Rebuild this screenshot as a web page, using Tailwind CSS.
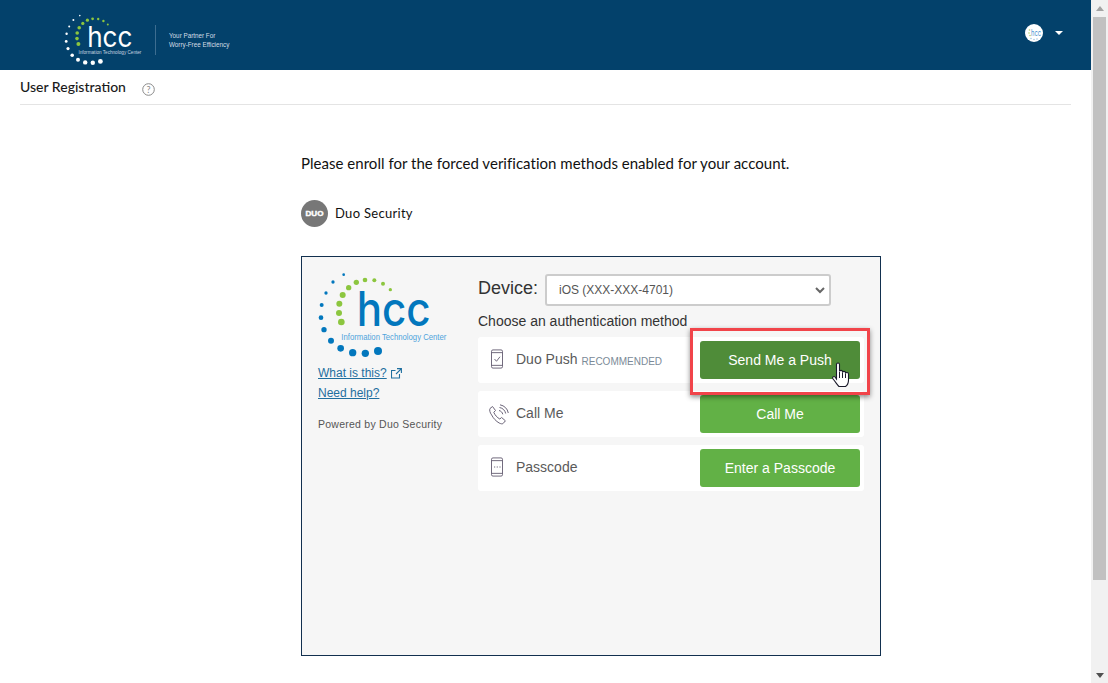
<!DOCTYPE html>
<html lang="en">
<head>
<meta charset="utf-8">
<title>User Registration</title>
<script src="https://cdn.jsdelivr.net/npm/@tailwindcss/browser@4"></script>
</head>
<body class="m-0 bg-white overflow-hidden">
<div class="relative flex w-[1108px] h-[683px] overflow-hidden font-['Lato',sans-serif]">
  <main class="w-[1091px] h-[683px] overflow-hidden">
    <header class="h-[70px] bg-[#03416b] flex items-start justify-between pl-[54px] pr-[28px]">
      <div class="flex items-start pt-[4px]">
        <svg width="108" height="64" viewBox="0 0 540 320">
          <g fill="#ffffff">
            <circle cx="129" cy="58" r="4"/><circle cx="97" cy="80" r="5"/><circle cx="76" cy="113" r="5"/><circle cx="63" cy="149" r="6"/><circle cx="61" cy="187" r="7"/><circle cx="70" cy="223" r="8"/><circle cx="91" cy="256" r="9"/><circle cx="120" cy="279" r="10"/><circle cx="156" cy="292" r="11"/><circle cx="194" cy="294" r="11"/><circle cx="232" cy="287" r="12"/>
          </g>
          <g fill="#8cc63f">
            <circle cx="269" cy="103" r="5"/><circle cx="247" cy="85" r="6"/><circle cx="221" cy="75" r="6"/><circle cx="193" cy="74" r="7"/><circle cx="167" cy="81" r="8"/><circle cx="144" cy="97" r="8"/><circle cx="126" cy="119" r="9"/><circle cx="116" cy="145" r="9"/><circle cx="115" cy="173" r="9"/><circle cx="122" cy="200" r="10"/>
          </g>
          <text x="166" y="213" font-family="Inter" font-weight="400" font-size="143" fill="#ffffff" textLength="226" lengthAdjust="spacingAndGlyphs">hcc</text>
          <text x="122" y="250" font-family="Liberation Sans" font-size="25" fill="#c9d6e0" textLength="315" lengthAdjust="spacingAndGlyphs">Information Technology Center</text>
        </svg>
        <div class="w-px h-[30px] bg-[#3d6d90] mt-[21px] ml-[-7px]"></div>
        <div class="ml-[13px] mt-[28px] text-[6.300px] leading-[8.500px] text-[#d5dee6] font-['Liberation_Sans',sans-serif] whitespace-nowrap">Your Partner For<br>Worry-Free Efficiency</div>
      </div>
      <div class="flex items-center gap-[12px] pt-[24px]">
        <svg class="block" width="18" height="18" viewBox="0 0 18 18">
          <circle cx="9" cy="9" r="9" fill="#ffffff"/>
          <g fill="#b5d56a"><circle cx="4.500" cy="6" r=".8"/><circle cx="4" cy="9" r=".8"/><circle cx="5" cy="11.500" r=".8"/></g>
          <g fill="#8fbde0"><circle cx="6" cy="14.500" r=".7"/><circle cx="9" cy="15.500" r=".7"/><circle cx="12" cy="15" r=".7"/></g>
          <text x="6" y="11.500" font-family="Inter" font-size="9" fill="#3f8fd0" textLength="10" lengthAdjust="spacingAndGlyphs">hcc</text>
        </svg>
        <svg width="8" height="4" viewBox="0 0 8 4"><path d="M0 0h8L4 4z" fill="#ffffff"/></svg>
      </div>
    </header>

    <div class="mx-[20px] w-[1051px] h-[35px] border-b border-[#e4e4e4] flex items-start pt-[8px]">
      <h1 class="text-[14px] leading-[18px] font-medium text-[#1a1a1a]">User Registration</h1>
      <svg class="ml-[16px] mt-[5px]" width="13" height="13" viewBox="0 0 13 13">
        <circle cx="6.500" cy="6.500" r="5.800" fill="none" stroke="#8a8a8a" stroke-width="1"/>
        <text x="6.500" y="9.600" text-anchor="middle" font-family="Lato" font-size="9" fill="#8a8a8a">?</text>
      </svg>
    </div>

    <section class="ml-[301px] w-[580px] pt-[48px]">
      <p class="text-[15px] leading-[20px] tracking-[0.03px] text-[#111111] whitespace-nowrap">Please enroll for the forced verification methods enabled for your account.</p>
      <div class="flex items-center gap-[7px] mt-[27px]">
        <svg class="block" width="27" height="27" viewBox="0 0 27 27">
          <circle cx="13.500" cy="13.500" r="13.500" fill="#777777"/>
          <text x="4.500" y="16" font-family="Liberation Sans" font-weight="700" font-size="7.500" fill="#ffffff" stroke="#ffffff" stroke-width=".4" textLength="18" lengthAdjust="spacingAndGlyphs">DUO</text>
        </svg>
        <span class="text-[13px] leading-[18px] mb-[2px] text-[#111111] tracking-[0.3px]">Duo Security</span>
      </div>

      <div class="mt-[29px] w-[580px] h-[400px] border border-[#12304f] bg-[#f6f6f6] flex font-['Liberation_Sans',sans-serif] pl-[16px] pt-[15px]">
        <div class="w-[160px] shrink-0">
          <svg class="block" width="130" height="88" viewBox="52 50 390 264">
            <g fill="#0277bd">
              <circle cx="129" cy="58" r="4"/><circle cx="97" cy="80" r="5"/><circle cx="76" cy="113" r="5"/><circle cx="63" cy="149" r="6"/><circle cx="61" cy="187" r="7"/><circle cx="70" cy="223" r="8"/><circle cx="91" cy="256" r="9"/><circle cx="120" cy="279" r="10"/><circle cx="156" cy="292" r="11"/><circle cx="194" cy="294" r="11"/><circle cx="232" cy="287" r="12"/>
            </g>
            <g fill="#8cc63f">
              <circle cx="269" cy="103" r="5"/><circle cx="247" cy="85" r="6"/><circle cx="221" cy="75" r="6"/><circle cx="193" cy="74" r="7"/><circle cx="167" cy="81" r="8"/><circle cx="144" cy="97" r="8"/><circle cx="126" cy="119" r="9"/><circle cx="116" cy="145" r="9"/><circle cx="115" cy="173" r="9"/><circle cx="122" cy="200" r="10"/>
            </g>
            <text x="168" y="213" font-family="Inter" font-weight="500" font-size="143" fill="#0277bd" textLength="222" lengthAdjust="spacingAndGlyphs">hcc</text>
            <text x="122" y="254" font-family="Liberation Sans" font-size="27" fill="#4ea4dc" textLength="315" lengthAdjust="spacingAndGlyphs">Information Technology Center</text>
          </svg>
          <div class="mt-[5px] flex items-center gap-[4px] text-[12px] leading-[16px] text-[#1f6f9f]">
            <a class="underline" href="#">What is this?</a>
            <svg width="11" height="11" viewBox="0 0 11 11" fill="none" stroke="#1f6f9f" stroke-width="1.100"><path d="M8.500 6v4h-8V2.500h4M6 .6h4.400V5M10.200.8 5 6"/></svg>
          </div>
          <a class="block mt-[4px] text-[12px] leading-[16px] text-[#1f6f9f] underline" href="#">Need help?</a>
          <p class="mt-[16px] text-[10.500px] leading-[14px] text-[#555555] tracking-[0.25px] whitespace-nowrap">Powered by Duo Security</p>
        </div>

        <div class="w-[386px] shrink-0">
          <div class="flex items-center h-[32px] mt-[2px]">
            <label class="text-[18px] leading-[24px] mb-[4px] text-[#333333] w-[67px]">Device:</label>
            <div class="relative w-[286px] h-[32px]">
              <select class="appearance-none w-full h-full border-2 border-[#cccccc] rounded-[3px] bg-white pl-[12px] text-[12px] text-[#555555]">
                <option>iOS (XXX-XXX-4701)</option>
              </select>
              <svg class="absolute right-[6px] top-[13px]" width="10" height="7" viewBox="0 0 10 7" fill="none" stroke="#666666" stroke-width="2"><path d="M1 1l4 4 4-4"/></svg>
            </div>
          </div>
          <p class="mt-[6px] text-[14px] leading-[18px] text-[#333333] whitespace-nowrap">Choose an authentication method</p>

          <div class="mt-[7px] flex flex-col gap-[8px]">
            <div class="h-[46px] bg-white rounded-[3px] flex items-center justify-between pl-[12px] pr-[4px]">
              <div class="flex items-center">
                <svg class="mr-[12px] mb-[2px]" width="14" height="20" viewBox="0 0 14 22" preserveAspectRatio="none" fill="none" stroke="#6b6478" stroke-width="1"><rect x="1.500" y="1" width="11" height="20" rx="1.500"/><path d="M1.500 4h11M1.500 18h11M4.500 11l2 2.500 3.500-5"/></svg>
                <span class="text-[14px] leading-[18px] mb-[2px] text-[#5a5a5a]">Duo Push</span>
                <span class="ml-[4px] mt-[3px] text-[10px] leading-[14px] text-[#7b8a97]">RECOMMENDED</span>
              </div>
              <button class="w-[160px] h-[38px] rounded-[3px] bg-[#4f8c39] text-white text-[14px]">Send Me a Push</button>
            </div>
            <div class="h-[46px] bg-white rounded-[3px] flex items-center justify-between pl-[10px] pr-[4px]">
              <div class="flex items-center">
                <svg class="mr-[7px]" width="21" height="21" viewBox="0 0 21 21" fill="none" stroke="#6b6478" stroke-width="1"><path d="M2 4.500 4.500 2.500l3 4-1.700 1.800c.9 2.500 3.400 5.400 6 6.700l1.800-1.500 3.800 3.300-2.200 2.600c-1 .8-2.500.4-4-.4-3-1.600-6-4.800-7.600-8.100C1.800 8.700 1.300 5.800 2 4.500z"/><path d="M11 6.500c2 .5 3.300 1.800 3.800 3.800M11.500 3.500c3.300.6 5.500 2.800 6.200 6M12 .8c4.300.8 7.500 3.800 8.300 8.200"/></svg>
                <span class="text-[14px] leading-[18px] mb-[2px] text-[#5a5a5a]">Call Me</span>
              </div>
              <button class="w-[160px] h-[38px] rounded-[3px] bg-[#62b146] text-white text-[14px]">Call Me</button>
            </div>
            <div class="h-[46px] bg-white rounded-[3px] flex items-center justify-between pl-[12px] pr-[4px]">
              <div class="flex items-center">
                <svg class="mr-[12px] mb-[2px]" width="14" height="20" viewBox="0 0 14 22" preserveAspectRatio="none" fill="none" stroke="#6b6478" stroke-width="1"><rect x="1.500" y="1" width="11" height="20" rx="1.500"/><path d="M1.500 4h11M1.500 18h11M4 11h1.200M6.700 11h1.200M9.400 11h1.200"/></svg>
                <span class="text-[14px] leading-[18px] mb-[2px] text-[#5a5a5a]">Passcode</span>
              </div>
              <button class="w-[160px] h-[38px] rounded-[3px] bg-[#62b146] text-white text-[14px]">Enter a Passcode</button>
            </div>
          </div>
        </div>
      </div>
    </section>
  </main>

  <aside class="w-[17px] h-[683px] bg-[#f1f1f1] flex flex-col items-center justify-between">
    <svg class="mt-[6px]" width="8" height="5" viewBox="0 0 8 5"><path d="M4 0l4 5H0z" fill="#a3a3a3"/></svg>
    <div class="absolute top-[17px] right-[2px] w-[13px] h-[563px] bg-[#c1c1c1]"></div>
    <svg class="mb-[5px]" width="8" height="5" viewBox="0 0 8 5"><path d="M0 0h8L4 5z" fill="#505050"/></svg>
  </aside>

  <div class="absolute left-[690px] top-[328px] w-[180px] h-[67px] border-[3px] border-[#f1444a] shadow-[0_2px_5px_rgba(0,0,0,0.45)]"></div>
  <svg class="absolute left-[831px] top-[362px]" width="20" height="26" viewBox="0 0 20 26">
    <path d="M5.500 2.500c0-2 3-2 3 0v7c0-1.500 3-1.500 3 0v1c0-1.500 3-1.500 3 0v1c0-1.500 3-1.300 3 .5v6c0 3-1.500 5.500-3 6.500H8c-1.500-1.500-3.500-4.500-6-7.500-1.300-1.600.8-3.300 2-2l1.500 2z" fill="#ffffff" stroke="#1a1a2a" stroke-width="1.100"/>
    <path d="M8.500 10v6M11.500 10.500V16M14.500 11.500V16" stroke="#1a1a2a" stroke-width="1" fill="none"/>
  </svg>
</div>
</body>
</html>
